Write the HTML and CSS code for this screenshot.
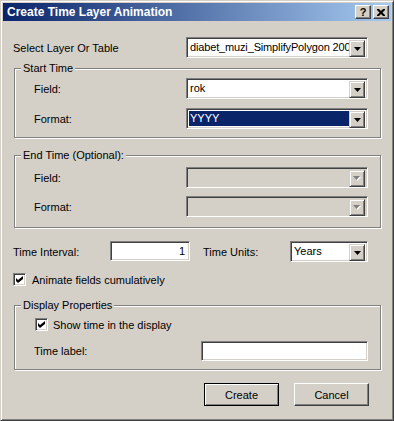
FILE: index.html
```html
<!DOCTYPE html>
<html lang="en">

<head>
    <meta charset="UTF-8">
    <meta name="viewport" content="width=device-width, initial-scale=1.0">
    <title>Create Time Layer Animation</title>
    <link rel="stylesheet" href="styles.css">
</head>

<body>
    <div class="window">
        <div class="titlebar">
            <span class="title">Create Time Layer Animation</span>
            <div class="caption-btns">
                <span class="cap-btn help">?</span>
                <span class="cap-btn">
                    <svg width="8" height="7" viewBox="0 0 8 7">
                        <path d="M0 0h2l2 2 2-2h2v1l-2.5 2.5 2.5 2.5v1h-2l-2-2-2 2h-2v-1l2.5-2.5-2.5-2.5z" fill="#000" />
                    </svg>
                </span>
            </div>
        </div>

        <div class="content">
            <div class="row top-row">
                <span class="lbl">Select Layer Or Table</span>
                <div class="combo">
                    <span class="combo-text tight">diabet_muzi_SimplifyPolygon 2000</span>
                    <span class="drop"><svg width="7" height="4" viewBox="0 0 7 4"><path d="M0 0h7l-3.5 4z" /></svg></span>
                </div>
            </div>

            <fieldset class="group start-group">
                <legend>Start Time</legend>
                <div class="group-body">
                    <div class="row">
                        <span class="lbl">Field:</span>
                        <div class="combo">
                            <span class="combo-text">rok</span>
                            <span class="drop"><svg width="7" height="4" viewBox="0 0 7 4"><path d="M0 0h7l-3.5 4z" /></svg></span>
                        </div>
                    </div>
                    <div class="row">
                        <span class="lbl">Format:</span>
                        <div class="combo">
                            <span class="combo-text selected">YYYY</span>
                            <span class="drop"><svg width="7" height="4" viewBox="0 0 7 4"><path d="M0 0h7l-3.5 4z" /></svg></span>
                        </div>
                    </div>
                </div>
            </fieldset>

            <fieldset class="group end-group">
                <legend>End Time (Optional):</legend>
                <div class="group-body">
                    <div class="row">
                        <span class="lbl">Field:</span>
                        <div class="combo disabled">
                            <span class="combo-text"></span>
                            <span class="drop"><svg width="8" height="5" viewBox="0 0 8 5"><path d="M1 1h7l-3.5 4z" fill="#fff" /><path d="M0 0h7l-3.5 4z" fill="#808080" /></svg></span>
                        </div>
                    </div>
                    <div class="row">
                        <span class="lbl">Format:</span>
                        <div class="combo disabled">
                            <span class="combo-text"></span>
                            <span class="drop"><svg width="8" height="5" viewBox="0 0 8 5"><path d="M1 1h7l-3.5 4z" fill="#fff" /><path d="M0 0h7l-3.5 4z" fill="#808080" /></svg></span>
                        </div>
                    </div>
                </div>
            </fieldset>

            <div class="row interval-row">
                <span class="lbl interval-lbl">Time Interval:</span>
                <div class="textbox interval-box">1</div>
                <span class="lbl units-lbl">Time Units:</span>
                <div class="combo units-combo">
                    <span class="combo-text">Years</span>
                    <span class="drop"><svg width="7" height="4" viewBox="0 0 7 4"><path d="M0 0h7l-3.5 4z" /></svg></span>
                </div>
            </div>

            <div class="check-row cumulative">
                <span class="checkbox"><svg width="7" height="7" viewBox="0 0 7 7"><path d="M0 2l2 2 5-4v3l-5 4-2-2z" /></svg></span>
                <span class="lbl">Animate fields cumulatively</span>
            </div>

            <fieldset class="group display-group">
                <legend>Display Properties</legend>
                <div class="group-body">
                    <div class="check-row show-time">
                        <span class="checkbox"><svg width="7" height="7" viewBox="0 0 7 7"><path d="M0 2l2 2 5-4v3l-5 4-2-2z" /></svg></span>
                        <span class="lbl">Show time in the display</span>
                    </div>
                    <div class="row label-row">
                        <span class="lbl">Time label:</span>
                        <div class="textbox label-box"></div>
                    </div>
                </div>
            </fieldset>

            <div class="buttons">
                <button class="btn default">Create</button>
                <button class="btn">Cancel</button>
            </div>
        </div>
    </div>
</body>

</html>
```

FILE: styles.css
```css
* {
    margin: 0;
    padding: 0;
    box-sizing: border-box;
}

body {
    background: #d4d0c8;
    font-family: "Liberation Sans", Arial, sans-serif;
    font-size: 11px;
    color: #000;
}

.window {
    width: 394px;
    height: 421px;
    background: #d4d0c8;
    border: 1px solid;
    border-color: #d4d0c8 #404040 #404040 #d4d0c8;
    box-shadow: inset 1px 1px #fff, inset -1px -1px #808080;
}

/* title bar */

.titlebar {
    height: 18px;
    margin: 2px 2px 0;
    padding-left: 4px;
    display: flex;
    align-items: center;
    background: linear-gradient(90deg, #0a246a, #a6caf0);
}

.title {
    color: #fff;
    font-weight: bold;
    font-size: 12px;
}

.caption-btns {
    margin-left: auto;
    margin-right: 2px;
    display: flex;
    gap: 2px;
}

.cap-btn {
    width: 16px;
    height: 14px;
    display: flex;
    align-items: center;
    justify-content: center;
    background: #d4d0c8;
    border: 1px solid;
    border-color: #fff #404040 #404040 #fff;
    box-shadow: inset -1px -1px #808080;
}

.cap-btn.help {
    font-weight: bold;
    font-size: 11px;
    line-height: 12px;
}

/* body */

.content {
    padding: 0 12px;
}

.row {
    display: flex;
    align-items: center;
    justify-content: space-between;
    height: 21px;
}

.top-row {
    margin-top: 16px;
    padding-right: 13px;
}

.lbl {
    white-space: nowrap;
}

/* combo box */

.combo {
    width: 182px;
    height: 21px;
    display: flex;
    padding: 2px;
    background: #fff;
    border: 1px solid;
    border-color: #808080 #fff #fff #808080;
    box-shadow: inset 1px 1px #404040, inset -1px -1px #d4d0c8;
}

.combo-text {
    flex: 1;
    overflow: hidden;
    white-space: nowrap;
    line-height: 15px;
    padding-left: 1px;
}

.combo-text.tight {
    letter-spacing: -0.15px;
}

.combo-text.selected {
    background: #0a246a;
    color: #fff;
}

.drop {
    width: 16px;
    height: 17px;
    flex: none;
    display: flex;
    align-items: center;
    justify-content: center;
    background: #d4d0c8;
    border: 1px solid;
    border-color: #d4d0c8 #404040 #404040 #d4d0c8;
    box-shadow: inset 1px 1px #fff, inset -1px -1px #808080;
}

.combo.disabled {
    background: #d4d0c8;
}

/* group boxes */

.group {
    margin-left: 1px;
    border: 1px solid #808080;
    box-shadow: inset 1px 1px #fff, 1px 1px #fff;
    padding: 0;
}

.group legend {
    margin-left: 6px;
    padding: 0 2px;
    line-height: 13px;
    background: #d4d0c8;
}

.group-body {
    padding: 0 12px 0 19px;
}

.start-group {
    margin-top: 4px;
}

.start-group .group-body {
    padding-top: 3px;
    padding-bottom: 8px;
}

.start-group .row + .row {
    margin-top: 9px;
}

.end-group {
    margin-top: 11px;
}

.end-group .group-body {
    padding-top: 5px;
    padding-bottom: 10px;
}

.end-group .row + .row {
    margin-top: 8px;
}

/* interval row */

.interval-row {
    margin-top: 13px;
    justify-content: flex-start;
}

.interval-lbl {
    width: 97px;
}

.textbox {
    height: 20px;
    background: #fff;
    border: 1px solid;
    border-color: #808080 #fff #fff #808080;
    box-shadow: inset 1px 1px #404040, inset -1px -1px #d4d0c8;
    line-height: 18px;
}

.interval-box {
    width: 80px;
    text-align: right;
    padding-right: 4px;
    align-self: flex-start;
}

.units-lbl {
    width: 87px;
    margin-left: 13px;
}

.units-combo {
    width: 78px;
}

/* check boxes */

.check-row {
    display: flex;
    align-items: center;
    gap: 6px;
    height: 13px;
}

.checkbox {
    width: 13px;
    height: 13px;
    flex: none;
    display: flex;
    align-items: center;
    justify-content: center;
    background: #fff;
    border: 1px solid;
    border-color: #808080 #fff #fff #808080;
    box-shadow: inset 1px 1px #404040, inset -1px -1px #d4d0c8;
}

.cumulative {
    margin-top: 11px;
}

.display-group {
    margin-top: 13px;
}

.display-group .group-body {
    padding-top: 6px;
    padding-bottom: 8px;
}

.show-time {
    margin-left: 1px;
    gap: 5px;
}

.label-row {
    margin-top: 10px;
    height: 20px;
}

.label-box {
    width: 167px;
}

/* buttons */

.buttons {
    margin-top: 13px;
    padding-right: 12px;
    display: flex;
    justify-content: flex-end;
    gap: 15px;
}

.btn {
    width: 75px;
    height: 23px;
    font-family: inherit;
    font-size: 11px;
    color: #000;
    background: #d4d0c8;
    border: 1px solid;
    border-color: #fff #404040 #404040 #fff;
    box-shadow: inset -1px -1px #808080, inset 1px 1px #d4d0c8;
}

.btn.default {
    border-color: #000;
    box-shadow: inset 1px 1px #fff, inset -1px -1px #808080;
}
```
